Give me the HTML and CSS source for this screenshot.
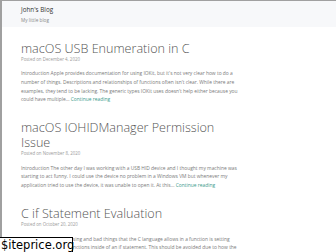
FILE: index.html
```html
<!DOCTYPE html>
<html>
<head>
<meta charset="utf-8">
<link rel="stylesheet" href="styles.css">
</head>
<body>
<div class="frame">
  <header class="site-header">
    <div class="site-title">John's Blog</div>
    <div class="site-sub">My little blog</div>
  </header>
  <main class="content">
    <article class="post">
      <h2 class="post-title">macOS USB Enumeration in C</h2>
      <div class="post-meta">Posted on December 4, 2020</div>
      <p class="post-excerpt">Introduction Apple provides documentation for using IOKit, but it's not very clear how to do a number of things. Descriptions and relationships of functions often isn't clear. While there are examples, they tend to be lacking. The generic types IOKit uses doesn't help either because you could have multiple… <a class="more">Continue reading</a></p>
    </article>
    <article class="post">
      <h2 class="post-title">macOS IOHIDManager Permission Issue</h2>
      <div class="post-meta">Posted on November 8, 2020</div>
      <p class="post-excerpt">Introduction The other day I was working with a USB HID device and I thought my machine was starting to act funny. I could use the device no problem in a Windows VM but whenever my application tried to use the device, it was unable to open it. At this… <a class="more">Continue reading</a></p>
    </article>
    <article class="post">
      <h2 class="post-title">C if Statement Evaluation</h2>
      <div class="post-meta">Posted on October 20, 2020</div>
      <p class="post-excerpt">One of the more confusing and bad things that the C language allows in a function is setting variables and calling functions inside of an if statement. This should be avoided due to how the statement can exit</p>
    </article>
  </main>
</div>
<div class="watermark">$iteprice.org</div>
</body>
</html>
```
FILE: styles.css
```css
html, body {
  margin: 0;
  padding: 0;
  background: #ffffff;
  overflow: hidden;
}
body {
  width: 336px;
  height: 252px;
  font-family: "Open Sans", "Liberation Sans", sans-serif;
}
.frame {
  border-top: 1px solid #a0a0a0;
  border-left: 2px solid #a0a0a0;
  height: 251px;
  box-sizing: border-box;
  overflow: hidden;
}
.site-header {
  background: #f7f8fa;
  height: 26px;
  padding: 5px 0 0 19px;
  box-sizing: border-box;
}
.site-title {
  font-size: 6.3px;
  line-height: 8px;
  color: #333;
}
.site-sub {
  font-size: 4.7px;
  line-height: 7px;
  margin-top: 3px;
  color: #888;
}
.content {
  padding: 13.5px 0 0 19px;
  width: 220px;
}
.post {
  margin-bottom: 16px;
}
.post-title {
  margin: 0;
  font-size: 12.6px;
  line-height: 15px;
  font-weight: 300;
  color: #555;
}
.post-meta {
  font-size: 4.4px;
  line-height: 6px;
  color: #9a9a9a;
}
.post-excerpt {
  margin: 7.5px 0 0 0;
  font-size: 4.9px;
  line-height: 8.8px;
  color: #7a7a7a;
}
.more {
  color: #3a9a8a;
}
.watermark {
  position: absolute;
  left: 0;
  bottom: 0;
  width: 73px;
  height: 15px;
  background: #fff;
  border: 1px solid #000;
  border-left: none;
  border-bottom: none;
  box-sizing: border-box;
  font-family: "DejaVu Sans", sans-serif;
  font-size: 11.5px;
  line-height: 14px;
  color: #000;
  padding-left: 1px;
}
```
